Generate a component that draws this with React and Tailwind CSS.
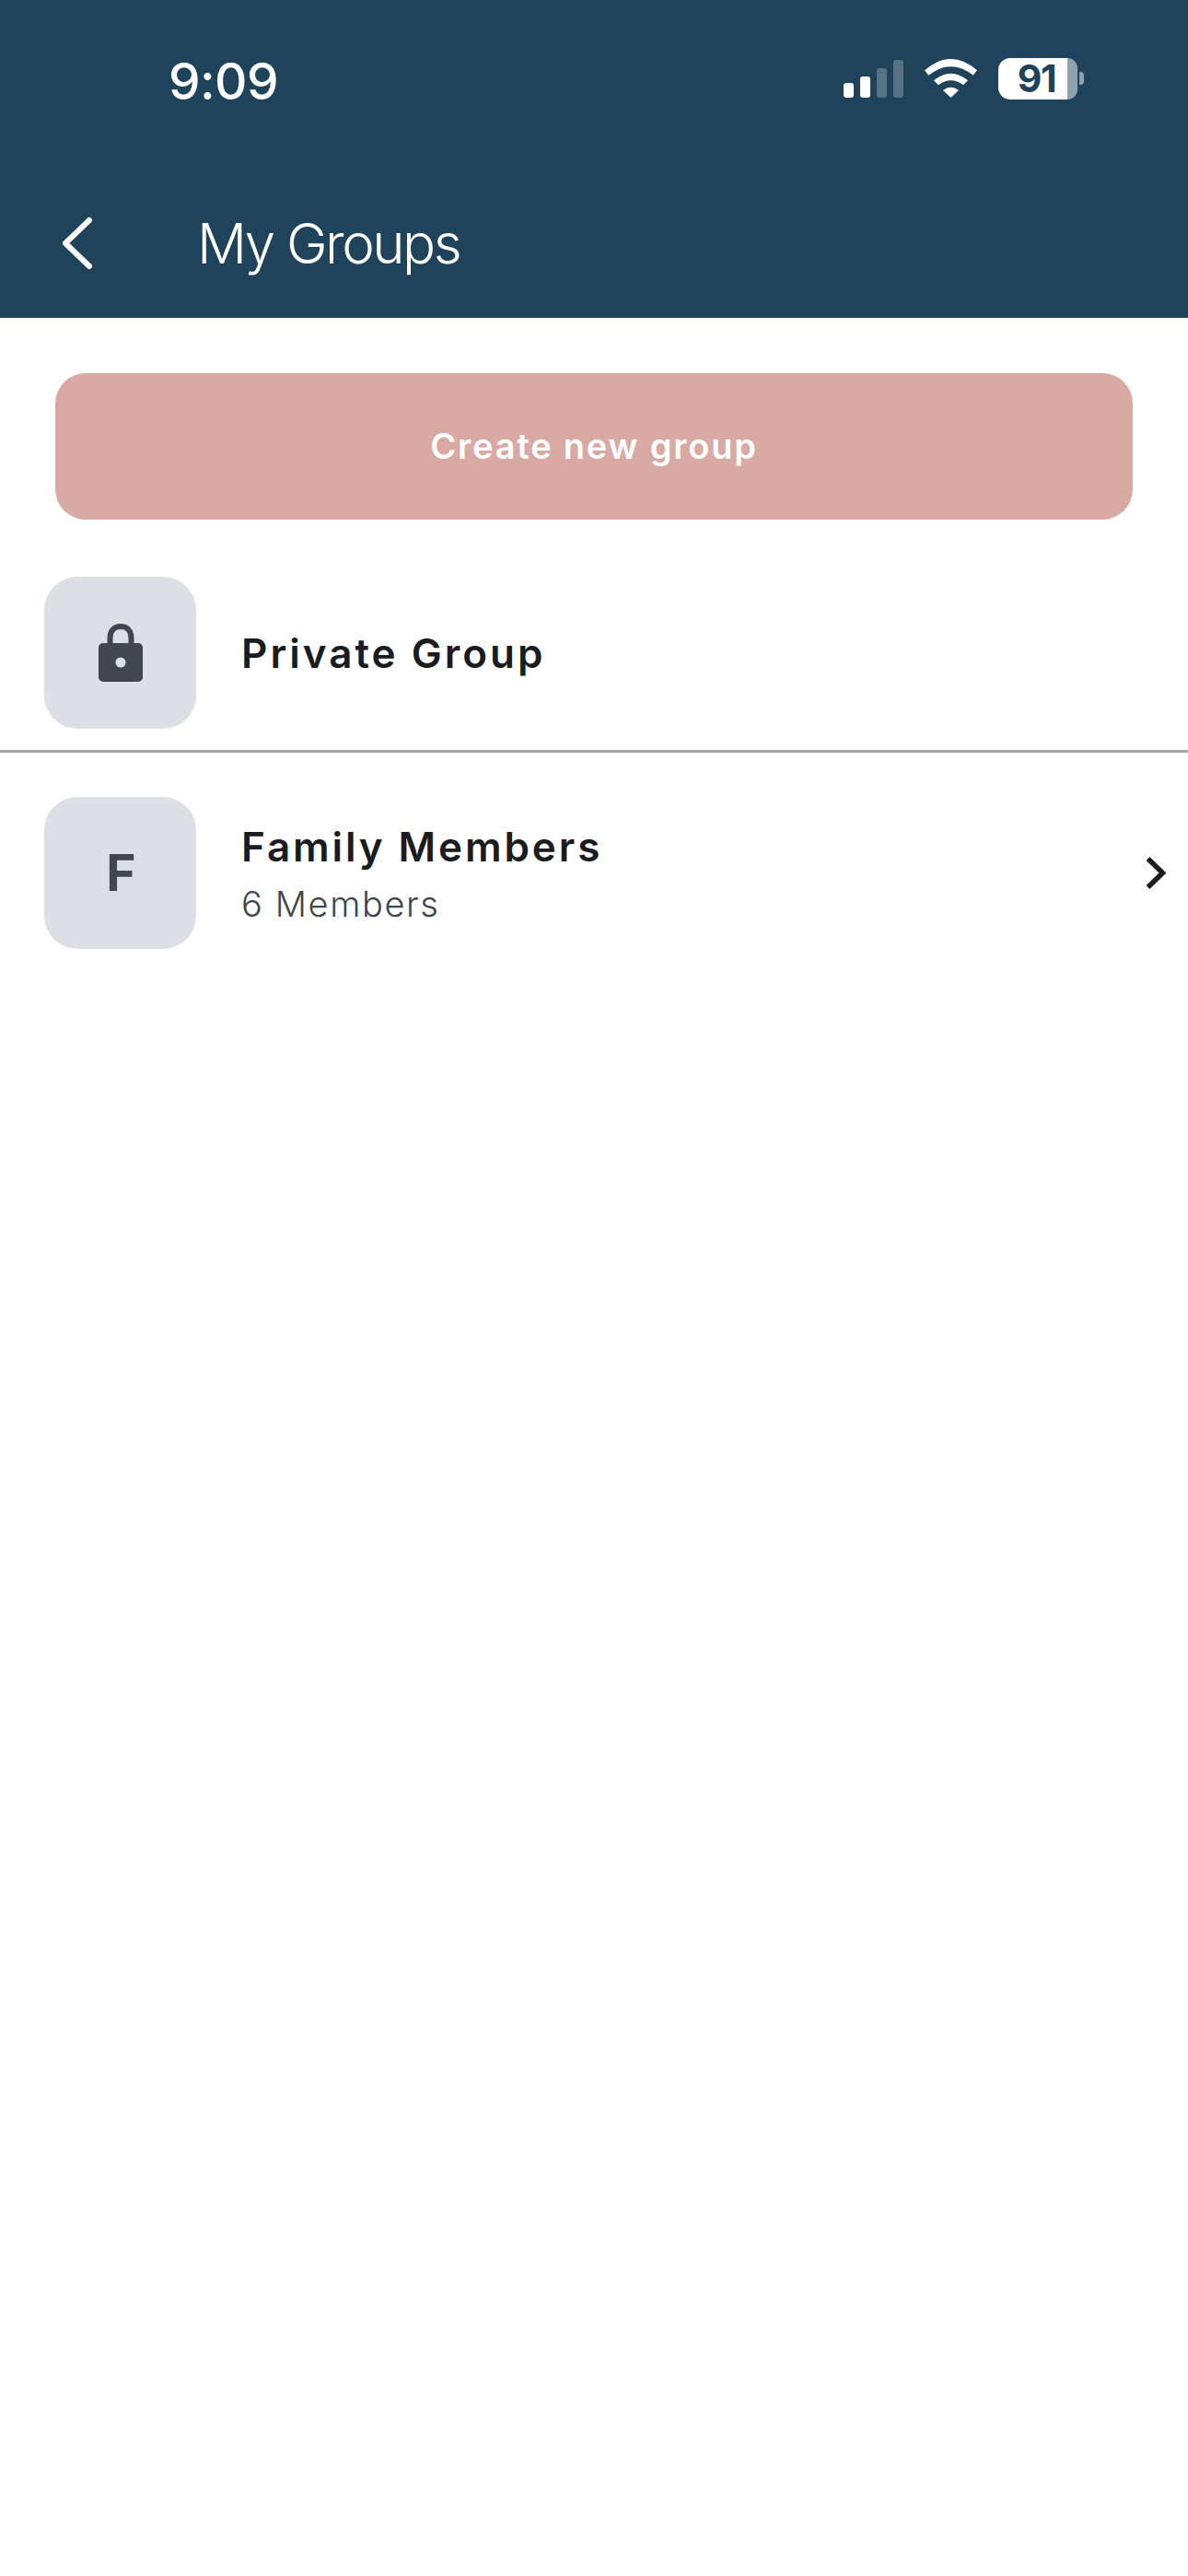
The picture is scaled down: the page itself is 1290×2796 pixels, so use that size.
function Wifi() {
  return (
    <svg width="57" height="42" viewBox="0 0 57 42" fill="white">
      <path d="M0 12.3Q28.5 -12.3 57 12.3L52.7 17.7Q28.5 -1.1 4.3 17.7Z" />
      <path d="M10 23.3Q28.5 8 47 23.3L42 28.3Q28.5 18.3 15 28.3Z" />
      <path d="M20 34Q28.5 27.4 37 34L28.5 42Z" />
    </svg>
  );
}

function Lock() {
  return (
    <svg width="48" height="63" viewBox="0 0 48 63">
      <path d="M12.5 24V15.5C12.5 7.5 17 3 24 3S35.5 7.5 35.5 15.5V24" fill="none" stroke="#41474d" strokeWidth="6" />
      <rect x="0" y="21" width="48" height="42" rx="5" fill="#41474d" />
      <circle cx="24" cy="42" r="5.5" fill="#dce0e4" />
    </svg>
  );
}

function Tile({ children }) {
  return (
    <div className="flex h-[165px] w-[165px] shrink-0 items-center justify-center rounded-[36px] bg-[#dce0e4]">
      {children}
    </div>
  );
}

export default function App() {
  return (
    <div className="min-h-[2796px] bg-white font-['Inter',sans-serif]">
      <header className="h-[345px] bg-[#1f435a] text-white">
        <div className="flex h-[232px] items-start justify-between pl-[183px] pr-[113px] pt-[63px]">
          <span className="text-[55px] leading-[50px] font-medium tracking-[-0.6px]">9:09</span>
          <div className="flex items-end">
            <div className="flex h-[45px] items-end gap-[7px] pb-[2px]">
              <div className="h-[16px] w-[11px] rounded-[3px] bg-white" />
              <div className="h-[23px] w-[11px] rounded-[3px] bg-white" />
              <div className="h-[32px] w-[11px] rounded-[3px] bg-white/25" />
              <div className="h-[41px] w-[11px] rounded-[3px] bg-white/25" />
            </div>
            <div className="ml-[23px] mb-[2px]">
              <Wifi />
            </div>
            <div className="ml-[23px] flex h-[45px] w-[86px]">
              <div className="flex w-[75px] items-center justify-center rounded-l-[13px] bg-white pl-[8px] text-[41px] leading-none font-bold tracking-[-1.5px] text-[#1f435a]">
                91
              </div>
              <div className="flex-1 rounded-r-[13px] bg-white/50" />
            </div>
            <div className="mb-[16px] ml-[2px] h-[14px] w-[5px] rounded-r-[4px] bg-white/50" />
          </div>
        </div>
        <div className="flex items-center pl-[67px] -mt-[3px]">
          <svg width="34" height="58" viewBox="0 0 34 58" fill="none" stroke="white" strokeWidth="6" strokeLinecap="round" strokeLinejoin="round">
            <path d="M30 4L4 29L30 54" />
          </svg>
          <h1 className="ml-[113px] text-[60px] leading-[70px] font-light tracking-[-2.5px]">My Groups</h1>
        </div>
      </header>

      <main>
        <div className="mx-[60px] mt-[60px] flex h-[159px] items-center justify-center rounded-[33px] bg-[#d9a9a4] text-[38px] font-semibold tracking-[1.8px] text-white">
          Create new group
        </div>

        <div className="mt-[62px] flex items-center pl-[48px] pr-[24px]">
          <Tile>
            <Lock />
          </Tile>
          <span className="ml-[49px] text-[44px] leading-[54px] font-semibold tracking-[3px] text-[#1a1c20]">Private Group</span>
        </div>

        <div className="mt-[23px] h-[3px] bg-[#a6a6a6]" />

        <div className="mt-[48px] flex items-center pl-[48px] pr-[24px]">
          <Tile>
            <span className="pl-[2px] text-[55px] leading-none font-bold text-[#41474d]">F</span>
          </Tile>
          <div className="ml-[49px] flex-1">
            <div className="text-[44px] leading-[54px] font-semibold tracking-[2.9px] text-[#1a1c20]">Family Members</div>
            <div className="mt-[12px] text-[38px] leading-[46px] font-light tracking-[1.6px] text-[#40464c]">6 Members</div>
          </div>
          <svg width="22" height="35" viewBox="0 0 22 35" fill="none" stroke="#1c1c1e" strokeWidth="5.5" strokeLinecap="butt" strokeLinejoin="miter">
            <path d="M2.5 2L18.5 17.5L2.5 33" />
          </svg>
        </div>
      </main>
    </div>
  );
}
